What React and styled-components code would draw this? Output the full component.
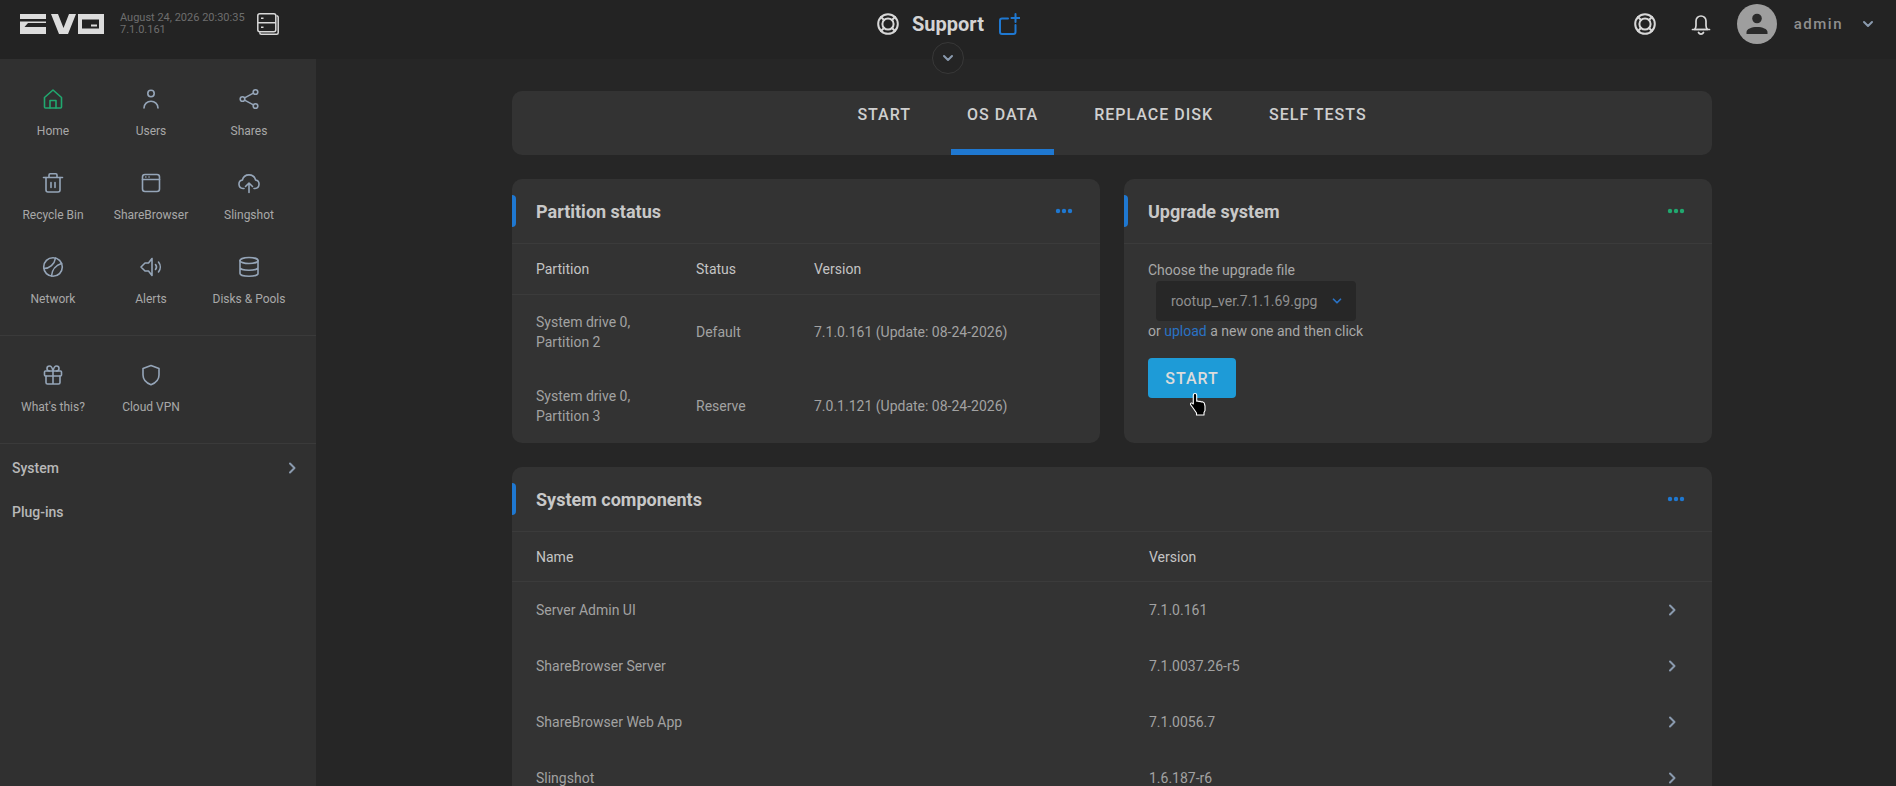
import React from 'react'
import styled, { createGlobalStyle } from 'styled-components'

const GlobalStyle = createGlobalStyle`
  html, body {
    margin: 0;
    height: 100%;
    overflow: hidden;
    background: #262626;
  }
  body {
    font-family: Roboto, "Liberation Sans", sans-serif;
  }
  * {
    box-sizing: border-box;
  }
`

const Icon = ({ children, size = 24, color = '#95a5b8', width = 1.6 }) => (
  <svg
    width={size}
    height={size}
    viewBox="0 0 24 24"
    fill="none"
    stroke={color}
    strokeWidth={width}
    strokeLinecap="round"
    strokeLinejoin="round"
  >
    {children}
  </svg>
)

const HomeGlyph = () => (
  <>
    <path d="M3.5 10.5 12 3l8.5 7.5V20a1 1 0 0 1-1 1h-15a1 1 0 0 1-1-1z" />
    <path d="M9 21v-7.5h6V21" />
  </>
)
const UserGlyph = () => (
  <>
    <circle cx="12" cy="6.5" r="3.2" />
    <path d="M5 21c0-4 3.2-6.8 7-6.8s7 2.8 7 6.8" />
  </>
)
const ShareGlyph = () => (
  <>
    <circle cx="18.5" cy="5" r="2.3" />
    <circle cx="5.5" cy="12" r="2.3" />
    <circle cx="18.5" cy="19" r="2.3" />
    <path d="M7.6 10.9 16.4 6.1M7.6 13.1l8.8 4.8" />
  </>
)
const TrashGlyph = () => (
  <>
    <path d="M2.5 6.5h19M8 6.5V4a1.200 1.200 0 0 1 1.200-1.200h5.600A1.200 1.200 0 0 1 16 4v2.500" />
    <path d="M5 6.500V19a2 2 0 0 0 2 2h10a2 2 0 0 0 2-2V6.500M10 11.500v5M14 11.500v5" />
  </>
)
const BrowserGlyph = () => (
  <>
    <rect x="3.500" y="3.500" width="17" height="17" rx="2.500" />
    <path d="M3.500 8.500h17M6.800 6h.1M10 6h.1" />
  </>
)
const CloudGlyph = () => (
  <>
    <path d="M7 17.500H6a4.300 4.300 0 0 1-.6-8.500 6.800 6.800 0 0 1 13.200 0 4.300 4.300 0 0 1-.6 8.500h-1" />
    <path d="M12 21.500V12M8.500 15.500 12 12l3.500 3.500" />
  </>
)
const NetworkGlyph = () => (
  <>
    <circle cx="12" cy="12" r="9.300" />
    <path d="M3 13.500c5.500 0 10.500-4 11.500-10.500M20.500 8.500c-5 1.500-9.500 6-10 12.500" />
  </>
)
const AlertGlyph = () => (
  <>
    <path d="M2 12l4-4h3.500L13 3.500v17L9.500 16H6z" />
    <path d="M16.500 9.500a4 4 0 0 1 0 5M19.500 7a8 8 0 0 1 0 10" />
  </>
)
const DiskGlyph = () => (
  <>
    <ellipse cx="12" cy="5.500" rx="9" ry="3" />
    <path d="M3 5.500V18.500c0 1.600 4 2.800 9 2.800s9-1.200 9-2.800V5.500M3 12.500c0 1.600 4 2.800 9 2.800s9-1.200 9-2.800" />
  </>
)
const GiftGlyph = () => (
  <>
    <rect x="3.500" y="8" width="17" height="5" rx="1" />
    <path d="M5 13v6.500a1.500 1.500 0 0 0 1.500 1.500h11a1.500 1.500 0 0 0 1.500-1.500V13M12 8v13" />
    <path d="M12 8S11 3 8.500 3a2.500 2.500 0 0 0 0 5M12 8s1-5 3.500-5a2.500 2.500 0 0 1 0 5" />
  </>
)
const ShieldGlyph = () => (
  <path d="M12 2.500 20 5.500V12c0 5-3.500 8-8 9.800C7.500 20 4 17 4 12V5.500z" />
)
const LifebuoyGlyph = () => (
  <>
    <circle cx="12" cy="12" r="9.800" />
    <circle cx="12" cy="12" r="5.600" />
    <path d="M5 5l3 3M19 5l-3 3M5 19l3-3M19 19l-3-3" />
  </>
)
const BellGlyph = () => (
  <>
    <path d="M5.500 17.500c1-1 1.500-2 1.500-4V9a5 5 0 0 1 10 0v4.500c0 2 .5 3 1.500 4z" />
    <path d="M3.500 17.500h17M9.500 20.500a2.800 2.800 0 0 0 5 0" />
  </>
)

const ServerIcon = () => (
  <svg width="24" height="24" viewBox="0 0 24 24" fill="none" stroke="#d8d8d8" strokeWidth="1.500" strokeLinejoin="round">
    <rect x="1.800" y="1.800" width="18" height="18" rx="2" />
    <path d="M1.800 10.800h18M5 6.300h2.500M5 15.300h2.500" />
    <path d="M20.500 3.800h.2a1.500 1.500 0 0 1 1.500 1.500v15.400a1.500 1.500 0 0 1-1.500 1.500H5.300a1.500 1.500 0 0 1-1.500-1.500v-.5" />
  </svg>
)

const PlusBoxIcon = () => (
  <svg width="24" height="24" viewBox="0 0 24 24" fill="none" stroke="#1f78d1" strokeWidth="2" strokeLinecap="round" strokeLinejoin="round">
    <path d="M12 6.500H6a2 2 0 0 0-2 2V20a2 2 0 0 0 2 2h11.500a2 2 0 0 0 2-2v-7" />
    <path d="M19.500 2v8M15.500 6h8" />
  </svg>
)

const Chevron = ({ dir = 'down', size = 16, color = '#8a9aae', width = 2 }) => (
  <svg width={size} height={size} viewBox="0 0 16 16" fill="none" stroke={color} strokeWidth={width} strokeLinecap="round" strokeLinejoin="round">
    <path d={dir === 'down' ? 'M4 6l4 4 4-4' : 'M6 3.500 10.500 8 6 12.500'} />
  </svg>
)

const Dots = ({ color }) => (
  <svg width="18" height="6" viewBox="0 0 18 6" fill={color}>
    <circle cx="3" cy="3" r="2.200" />
    <circle cx="9" cy="3" r="2.200" />
    <circle cx="15" cy="3" r="2.200" />
  </svg>
)

const Logo = () => (
  <svg width="84" height="20" viewBox="0 0 84 20" fill="#dcdcdc">
    <path d="M0 0h26v5H0zM0 7.500h26v1.500L8 9l-3.500 4H26v7H0z" />
    <path d="M31 0h7l5.500 14L49 0h7l-8 20H39z" />
    <path fillRule="evenodd" d="M58 0h26v20H58zM62 5.500v9h17v-9zM71 10.500h6v2h-6z" />
  </svg>
)

const Avatar = styled.div`
  width: 40px;
  height: 40px;
  border-radius: 50%;
  background: #9e9e9e;
  display: flex;
  align-items: center;
  justify-content: center;
`

const HandCursor = () => (
  <svg width="20" height="24" viewBox="0 0 20 24">
    <path
      d="M6 1.500c1 0 1.700.8 1.700 1.800v6l1-.2 1.200.5 1.100-.3 1.200.6 1.200-.2 1.800 1.200.8 3.100v4.500l-1 2v2.500H7.500v-2L3 14.500c-1.200-1.300-2-2-1.500-3 .6-.9 1.800-.5 2.800.5V3.300c0-1 .7-1.800 1.700-1.800z"
      fill="#000"
      stroke="#fff"
      strokeWidth="1.100"
      strokeLinejoin="round"
    />
  </svg>
)

const Page = styled.div`
  height: 786px;
  display: flex;
  flex-direction: column;
  overflow: hidden;
`

const Header = styled.header`
  position: relative;
  flex: none;
  height: 59px;
  padding: 0 20px 11px;
  background: #232323;
  display: grid;
  grid-template-columns: 1fr auto 1fr;
  align-items: center;
`

const HeaderLeft = styled.div`
  display: flex;
  align-items: center;
`

const DateBlock = styled.div`
  width: 136px;
  margin-left: 16px;
  font-size: 11px;
  line-height: 12px;
  color: #6e6e6e;
`

const HeaderTitle = styled.div`
  display: flex;
  align-items: center;
  gap: 12px;
  font-size: 20px;
  font-weight: 700;
  color: #d4d4d4;
`

const HeaderRight = styled.div`
  display: flex;
  align-items: center;
  justify-content: flex-end;
`

const HeaderIcon = styled.span`
  display: flex;
  margin-right: ${(p) => p.$gap}px;
`

const UserName = styled.span`
  margin: 0 17px;
  font-size: 15px;
  font-weight: 500;
  letter-spacing: 1.5px;
  color: #8f8f8f;
`

const CollapseButton = styled.button`
  position: absolute;
  left: 932px;
  top: 42px;
  width: 32px;
  height: 32px;
  padding: 0;
  border: 1px solid #383838;
  border-radius: 50%;
  background: #242424;
  display: flex;
  align-items: center;
  justify-content: center;
  z-index: 2;
`

const Body = styled.div`
  flex: 1;
  min-height: 0;
  display: flex;
`

const Sidebar = styled.aside`
  flex: none;
  width: 316px;
  background: #303030;
`

const NavGrid = styled.nav`
  display: grid;
  grid-template-columns: repeat(3, 98px);
  grid-auto-rows: 84px;
  padding: ${(p) => p.$top}px 0 12px 4px;
  border-bottom: 1px solid #3a3a3a;
`

const NavItem = styled.a`
  display: flex;
  flex-direction: column;
  align-items: center;
  gap: 12px;
  padding-top: 16px;
  font-size: 12px;
  line-height: 16px;
  color: #a8a8a8;
`

const MenuList = styled.div`
  padding-top: 2px;
`

const MenuRow = styled.div`
  height: 44px;
  padding: 0 16px 0 12px;
  display: flex;
  align-items: center;
  justify-content: space-between;
  font-size: 14px;
  font-weight: 500;
  color: #b8b8b8;
`

const Main = styled.main`
  flex: 1;
  min-width: 0;
  padding: 32px 0 0 12px;
  display: flex;
  justify-content: center;
`

const Content = styled.div`
  width: 1200px;
  display: flex;
  flex-direction: column;
  gap: 24px;
`

const Panel = styled.section`
  background: #333333;
  border-radius: 10px;
`

const TabBar = styled(Panel)`
  flex: none;
  height: 64px;
  display: flex;
  justify-content: center;
  gap: 24px;
`

const Tab = styled.div`
  padding: 0 16px;
  display: flex;
  align-items: center;
  padding-bottom: 12px;
  font-size: 16px;
  font-weight: 500;
  letter-spacing: 1px;
  color: #cfcfcf;
  border-bottom: 6px solid ${(p) => (p.$active ? '#1f78d1' : 'transparent')};
`

const CardRow = styled.div`
  flex: none;
  display: grid;
  grid-template-columns: 1fr 1fr;
  gap: 24px;
`

const CardHead = styled.div`
  position: relative;
  height: 65px;
  padding: 0 24px;
  display: flex;
  align-items: center;
  justify-content: space-between;
  border-bottom: 1px solid #3b3b3b;

  &::before {
    content: '';
    position: absolute;
    left: 0;
    top: 16px;
    width: 4px;
    height: 32px;
    border-radius: 0 4px 4px 0;
    background: #1f78d1;
  }
`

const CardTitle = styled.h2`
  margin: 0;
  font-size: 18px;
  font-weight: 700;
  color: #c8c8c8;
`

const DotsBox = styled.span`
  width: 24px;
  display: flex;
  justify-content: center;
`

const Row = styled.div`
  height: ${(p) => p.$height}px;
  padding: 0 24px;
  display: grid;
  grid-template-columns: ${(p) => p.$cols};
  align-items: center;
  font-size: 14px;
  line-height: 20px;
  color: ${(p) => (p.$head ? '#c4c4c4' : '#a2a2a2')};
  border-bottom: ${(p) => (p.$head ? '1px solid #3b3b3b' : 'none')};
`

const UpgradeBody = styled.div`
  padding: 16px 24px 0;
  font-size: 14px;
  line-height: 20px;
  color: #a8a8a8;
`

const FileSelect = styled.div`
  width: 200px;
  height: 40px;
  margin: 1px 0 0 8px;
  padding: 0 12px 0 15px;
  border-radius: 4px;
  background: #272727;
  display: flex;
  align-items: center;
  justify-content: space-between;
  color: #8f8f8f;
`

const UploadLink = styled.a`
  color: #2a72c4;
`

const ButtonWrap = styled.div`
  position: relative;
  width: 88px;
  margin-top: 17px;
`

const StartButton = styled.button`
  width: 88px;
  height: 40px;
  padding: 0;
  border: 0;
  border-radius: 4px;
  background: #1e9bd7;
  font-family: inherit;
  font-size: 16px;
  font-weight: 500;
  letter-spacing: 1px;
  color: #dcdcdc;
`

const CursorSpot = styled.span`
  position: absolute;
  left: 41px;
  top: 34px;
  display: flex;
`

const navMain = [
  ['Home', HomeGlyph, '#21a86f'],
  ['Users', UserGlyph],
  ['Shares', ShareGlyph],
  ['Recycle Bin', TrashGlyph],
  ['ShareBrowser', BrowserGlyph],
  ['Slingshot', CloudGlyph],
  ['Network', NetworkGlyph],
  ['Alerts', AlertGlyph],
  ['Disks & Pools', DiskGlyph],
]

const navExtra = [
  ["What's this?", GiftGlyph],
  ['Cloud VPN', ShieldGlyph],
]

const tabs = ['START', 'OS DATA', 'REPLACE DISK', 'SELF TESTS']

const partitions = [
  ['System drive 0,', 'Partition 2', 'Default', '7.1.0.161 (Update: 08-24-2026)'],
  ['System drive 0,', 'Partition 3', 'Reserve', '7.0.1.121 (Update: 08-24-2026)'],
]

const components = [
  ['Server Admin UI', '7.1.0.161'],
  ['ShareBrowser Server', '7.1.0037.26-r5'],
  ['ShareBrowser Web App', '7.1.0056.7'],
  ['Slingshot', '1.6.187-r6'],
]

const partitionCols = '160px 118px 1fr'
const componentCols = '613px 1fr 24px'

function NavItems({ items }) {
  return items.map(([label, Glyph, color]) => (
    <NavItem key={label}>
      <Icon color={color}>
        <Glyph />
      </Icon>
      {label}
    </NavItem>
  ))
}

function CardHeader({ title, dotColor = '#1f78d1' }) {
  return (
    <CardHead>
      <CardTitle>{title}</CardTitle>
      <DotsBox>
        <Dots color={dotColor} />
      </DotsBox>
    </CardHead>
  )
}

export default function App() {
  return (
    <Page>
      <GlobalStyle />
      <Header>
        <HeaderLeft>
          <Logo />
          <DateBlock>
            August 24, 2026 20:30:35
            <br />
            7.1.0.161
          </DateBlock>
          <ServerIcon />
        </HeaderLeft>
        <HeaderTitle>
          <Icon color="#d8d8d8" width={2}>
            <LifebuoyGlyph />
          </Icon>
          Support
          <PlusBoxIcon />
        </HeaderTitle>
        <HeaderRight>
          <HeaderIcon $gap={32}>
            <Icon color="#d8d8d8" width={2}>
              <LifebuoyGlyph />
            </Icon>
          </HeaderIcon>
          <HeaderIcon $gap={24}>
            <Icon color="#d8d8d8" width={1.7}>
              <BellGlyph />
            </Icon>
          </HeaderIcon>
          <Avatar>
            <svg width="40" height="40" viewBox="0 0 40 40" fill="#2b2b2b">
              <circle cx="20" cy="14.500" r="4.800" />
              <path d="M9.500 30v-2c0-3 5-5 10.500-5s10.500 2 10.500 5v2z" />
            </svg>
          </Avatar>
          <UserName>admin</UserName>
          <Chevron />
        </HeaderRight>
        <CollapseButton>
          <Chevron />
        </CollapseButton>
      </Header>
      <Body>
        <Sidebar>
          <NavGrid $top={12}>
            <NavItems items={navMain} />
          </NavGrid>
          <NavGrid $top={11}>
            <NavItems items={navExtra} />
          </NavGrid>
          <MenuList>
            <MenuRow>
              System
              <Chevron dir="right" />
            </MenuRow>
            <MenuRow>Plug-ins</MenuRow>
          </MenuList>
        </Sidebar>
        <Main>
          <Content>
            <TabBar>
              {tabs.map((tab) => (
                <Tab key={tab} $active={tab === 'OS DATA'}>
                  {tab}
                </Tab>
              ))}
            </TabBar>
            <CardRow>
              <Panel>
                <CardHeader title="Partition status" />
                <Row $head $height={51} $cols={partitionCols}>
                  <span>Partition</span>
                  <span>Status</span>
                  <span>Version</span>
                </Row>
                {partitions.map(([drive, part, status, version]) => (
                  <Row key={part} $height={74} $cols={partitionCols}>
                    <span>
                      {drive}
                      <br />
                      {part}
                    </span>
                    <span>{status}</span>
                    <span>{version}</span>
                  </Row>
                ))}
              </Panel>
              <Panel>
                <CardHeader title="Upgrade system" dotColor="#21a86f" />
                <UpgradeBody>
                  Choose the upgrade file
                  <FileSelect>
                    rootup_ver.7.1.1.69.gpg
                    <Chevron color="#2a72c4" size={14} />
                  </FileSelect>
                  or <UploadLink>upload</UploadLink> a new one and then click
                  <ButtonWrap>
                    <StartButton>START</StartButton>
                    <CursorSpot>
                      <HandCursor />
                    </CursorSpot>
                  </ButtonWrap>
                </UpgradeBody>
              </Panel>
            </CardRow>
            <Panel>
              <CardHeader title="System components" />
              <Row $head $height={50} $cols={componentCols}>
                <span>Name</span>
                <span>Version</span>
              </Row>
              {components.map(([name, version]) => (
                <Row key={name} $height={56} $cols={componentCols}>
                  <span>{name}</span>
                  <span>{version}</span>
                  <Chevron dir="right" />
                </Row>
              ))}
            </Panel>
          </Content>
        </Main>
      </Body>
    </Page>
  )
}
